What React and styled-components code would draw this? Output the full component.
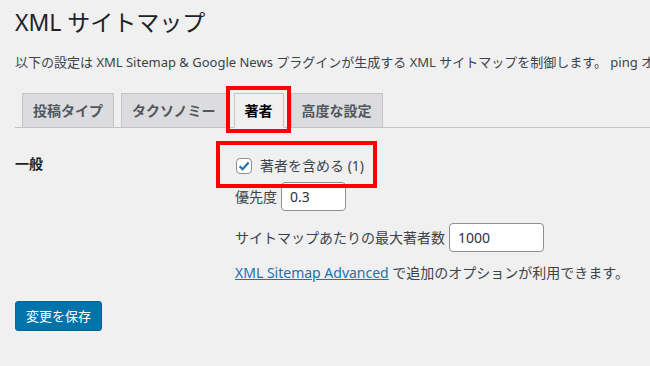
import React from 'react';
import styled, { createGlobalStyle } from 'styled-components';

const GlobalStyle = createGlobalStyle`
  html, body {
    margin: 0;
    padding: 0;
    background: #f0f0f1;
  }

  body {
    font-family: "Noto Sans", "Noto Sans CJK JP", sans-serif;
    color: #3c434a;
    font-size: 13px;
    overflow: hidden;
  }
`;

const Wrap = styled.div`
  padding: 7px 0 0 15px;
  width: 635px;
  height: 359px;
  overflow: hidden;
`;

const Title = styled.h1`
  margin: 0;
  font-size: 23px;
  font-weight: 400;
  line-height: 30px;
  color: #1d2327;
`;

const Intro = styled.p`
  margin: 15px 0 0;
  font-size: 13px;
  line-height: 20px;
  white-space: nowrap;
`;

const TabBar = styled.nav`
  display: flex;
  gap: 7px;
  margin-top: 21px;
  padding-left: 7px;
  border-bottom: 1px solid #c3c4c7;
  height: 34px;
  align-items: flex-end;
`;

const Tab = styled.a`
  position: relative;
  display: block;
  box-sizing: border-box;
  height: 35px;
  margin-bottom: -1px;
  padding: 5px 10px;
  font-size: 14px;
  font-weight: 600;
  line-height: 24px;
  color: ${p => (p.$active ? '#000' : '#50575e')};
  background: ${p => (p.$active ? '#f0f0f1' : '#dcdcde')};
  border: 1px solid #c3c4c7;
  border-bottom-color: ${p => (p.$active ? '#f0f0f1' : '#c3c4c7')};
  white-space: nowrap;

  ${p => p.$marked && `
    &::after {
      content: '';
      position: absolute;
      top: -8px;
      left: -9px;
      right: -8px;
      bottom: -6px;
      border: 4px solid #ff0000;
      pointer-events: none;
    }
  `}
`;

const FormRow = styled.div`
  display: grid;
  grid-template-columns: 220px 1fr;
`;

const RowLabel = styled.div`
  padding-top: 26px;
  font-size: 14px;
  font-weight: 600;
  line-height: 20px;
  color: #1d2327;
`;

const Fields = styled.div`
  padding-top: 28px;
  display: flex;
  flex-direction: column;
  align-items: flex-start;
`;

const CheckLine = styled.label`
  position: relative;
  display: flex;
  align-items: center;
  gap: 8px;
  height: 20px;
  margin-left: 1px;
  font-size: 14px;
  line-height: 20px;

  &::after {
    content: '';
    position: absolute;
    top: -15px;
    left: -20px;
    right: -13px;
    bottom: -12px;
    border: 4px solid #ff0000;
    pointer-events: none;
  }
`;

const Box = styled.span`
  display: flex;
  align-items: center;
  justify-content: center;
  box-sizing: border-box;
  width: 16px;
  height: 16px;
  background: #fff;
  border: 1px solid #8c8f94;
  border-radius: 4px;
`;

const InputLine = styled.div`
  display: flex;
  align-items: center;
  gap: 4px;
  margin-top: ${p => p.$gap}px;
  font-size: 14px;
  line-height: 20px;
`;

const TextInput = styled.div`
  box-sizing: border-box;
  width: ${p => p.$width}px;
  height: 29px;
  padding: 0 8px;
  display: flex;
  align-items: center;
  background: #fff;
  border: 1px solid #8c8f94;
  border-radius: 4px;
  font-size: 14px;
  color: #2c3338;
`;

const Note = styled.p`
  margin: 11px 0 0;
  font-size: 14px;
  line-height: 20px;

  a {
    color: #2271b1;
    text-decoration: underline;
  }
`;

const SaveButton = styled.button`
  margin-top: 18px;
  box-sizing: border-box;
  height: 30px;
  padding: 0 10px;
  font-family: inherit;
  font-size: 13px;
  line-height: 28px;
  color: #fff;
  background: #0073aa;
  border: 1px solid #006799;
  border-radius: 3px;
`;

const tabs = [
  { label: '投稿タイプ' },
  { label: 'タクソノミー' },
  { label: '著者', active: true },
  { label: '高度な設定' },
];

export default function App() {
  return (
    <Wrap>
      <GlobalStyle />
      <Title>XML サイトマップ</Title>
      <Intro>
        以下の設定は XML Sitemap &amp; Google News プラグインが生成する XML サイトマップを制御します。 ping オプションについては
      </Intro>
      <TabBar>
        {tabs.map(t => (
          <Tab key={t.label} $active={t.active} $marked={t.active}>
            {t.label}
          </Tab>
        ))}
      </TabBar>
      <FormRow>
        <RowLabel>一般</RowLabel>
        <Fields>
          <CheckLine>
            <Box>
              <svg width="14" height="14" viewBox="0 0 14 14">
                <path d="M2.6 7.2 L5.6 10.2 L11.6 3.4" fill="none" stroke="#2271b1" strokeWidth="2.2" />
              </svg>
            </Box>
            著者を含める (1)
          </CheckLine>
          <InputLine $gap={6}>
            優先度
            <TextInput $width={65}>0.3</TextInput>
          </InputLine>
          <InputLine $gap={12}>
            サイトマップあたりの最大著者数
            <TextInput $width={95}>1000</TextInput>
          </InputLine>
          <Note>
            <a>XML Sitemap Advanced</a> で追加のオプションが利用できます。
          </Note>
        </Fields>
      </FormRow>
      <SaveButton>変更を保存</SaveButton>
    </Wrap>
  );
}
